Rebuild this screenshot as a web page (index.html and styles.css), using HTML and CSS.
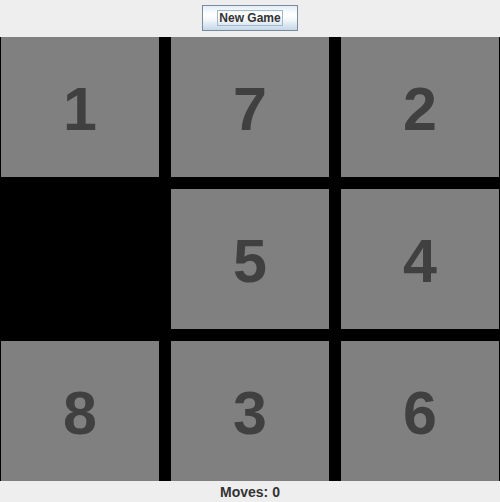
FILE: index.html
```html
<!DOCTYPE html>
<html>
<head>
<meta charset="utf-8">
<link rel="stylesheet" href="styles.css">
</head>
<body>
<div class="app">
  <div class="topbar">
    <button class="btn"><span class="focus">New Game</span></button>
  </div>
  <div class="board">
    <div class="tile">1</div>
    <div class="tile">7</div>
    <div class="tile">2</div>
    <div class="tile empty"></div>
    <div class="tile">5</div>
    <div class="tile">4</div>
    <div class="tile">8</div>
    <div class="tile">3</div>
    <div class="tile">6</div>
  </div>
  <div class="status">Moves: 0</div>
</div>
</body>
</html>
```
FILE: styles.css
```css
html, body {
  margin: 0;
  padding: 0;
  background: #eeeeee;
}
.app {
  width: 500px;
  height: 502px;
  display: flex;
  flex-direction: column;
  font-family: "Liberation Sans", Arial, sans-serif;
}
.topbar {
  height: 37px;
  display: flex;
  justify-content: center;
  align-items: flex-start;
  padding-top: 5px;
  box-sizing: border-box;
}
.btn {
  width: 96px;
  height: 26px;
  margin: 0;
  padding: 0;
  border: 1px solid #7a8a99;
  border-radius: 0;
  background: linear-gradient(to bottom, #e4edf6 0%, #ffffff 35%, #f6f9fc 55%, #c4d7ea 100%);
  font-family: "Liberation Sans", Arial, sans-serif;
  font-weight: bold;
  font-size: 12px;
  color: #333333;
  display: flex;
  justify-content: center;
  align-items: center;
}
.focus {
  border: 1px solid #a3b8cc;
  padding: 1px 1px;
  line-height: 12px;
}
.board {
  height: 444px;
  background: #000000;
  padding: 0 1px;
  display: grid;
  grid-template-columns: repeat(3, 158px);
  grid-template-rows: repeat(3, 140px);
  column-gap: 12px;
  row-gap: 12px;
}
.tile {
  background: #808080;
  color: #404040;
  font-weight: bold;
  font-size: 61px;
  padding-top: 4px;
  box-sizing: border-box;
  display: flex;
  justify-content: center;
  align-items: center;
}
.tile.empty {
  background: #000000;
}
.status {
  flex: 1;
  display: flex;
  justify-content: center;
  align-items: center;
  font-weight: bold;
  font-size: 14px;
  color: #333333;
}
```
